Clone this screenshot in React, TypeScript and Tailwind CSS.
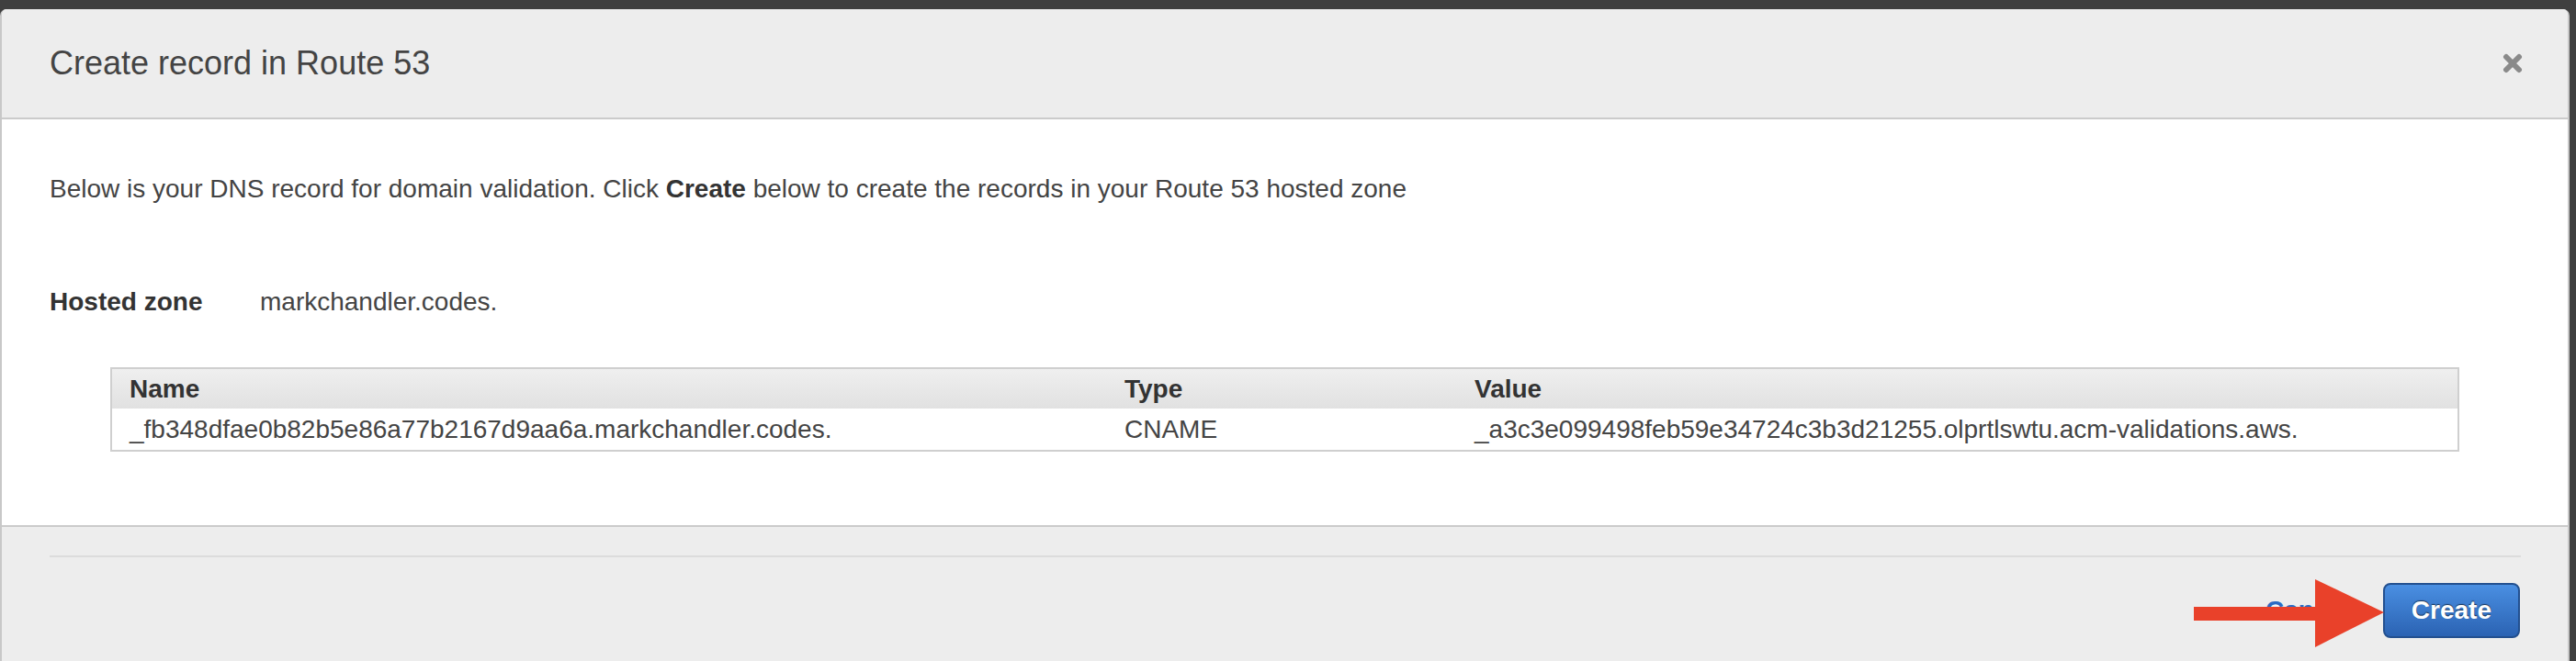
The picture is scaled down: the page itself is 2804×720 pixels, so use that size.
import React from 'react';

const records = [
  {
    name: '_fb348dfae0b82b5e86a77b2167d9aa6a.markchandler.codes.',
    type: 'CNAME',
    value: '_a3c3e099498feb59e34724c3b3d21255.olprtlswtu.acm-validations.aws.',
  },
];

export default function App() {
  return (
    <div className="h-[720px] w-full overflow-hidden bg-[#3f3f3f] pt-[10px] font-['Liberation_Sans',Arial,sans-serif]">
      <div className="w-[2797px] overflow-hidden rounded-t-[7px] border-x-2 border-[#c8c8c8] bg-white">
        {/* Header */}
        <div className="flex h-[120px] items-center justify-between border-b-2 border-[#cbcbcb] bg-[#ededed] pl-[52px] pr-[48px]">
          <h1 className="text-[36px] leading-none text-[#444]">Create record in Route 53</h1>
          <button className="flex h-[24px] w-[24px] items-center justify-center">
            <svg width="22" height="22" viewBox="0 0 22 22">
              <path d="M4 4 L18 18 M18 4 L4 18" stroke="#8a8a8a" strokeWidth="6" strokeLinecap="round" />
            </svg>
          </button>
        </div>

        {/* Body */}
        <div className="px-[52px] pb-[80px] pt-[56px] text-[28px] leading-[40px] text-[#444]">
          <p>
            Below is your DNS record for domain validation. Click <strong className="font-bold text-[#333]">Create</strong> below to create the records in your Route 53 hosted zone
          </p>

          <div className="mt-[83px] flex">
            <span className="w-[229px] font-bold text-[#333]">Hosted zone</span>
            <span>markchandler.codes.</span>
          </div>

          <div className="mx-[66px] mt-[51px] border-2 border-[#cfcfcf]">
            <table className="w-full table-fixed border-collapse text-left text-[28px]">
              <colgroup>
                <col className="w-[1083px]" />
                <col className="w-[381px]" />
                <col />
              </colgroup>
              <thead>
                <tr className="h-[43px] bg-gradient-to-b from-[#efefef] to-[#e1e1e1]">
                  <th className="px-[19px] font-bold leading-none text-[#333]">Name</th>
                  <th className="px-[19px] font-bold leading-none text-[#333]">Type</th>
                  <th className="px-[19px] font-bold leading-none text-[#333]">Value</th>
                </tr>
              </thead>
              <tbody>
                {records.map((r) => (
                  <tr key={r.name} className="h-[45px] bg-white">
                    <td className="px-[19px] leading-none">{r.name}</td>
                    <td className="px-[19px] leading-none">{r.type}</td>
                    <td className="px-[19px] leading-none">{r.value}</td>
                  </tr>
                ))}
              </tbody>
            </table>
          </div>
        </div>

        {/* Footer */}
        <div className="relative h-[200px] border-t-2 border-[#cbcbcb] bg-[#ededed] px-[52px] pt-[31px]">
          <div className="mr-[-1px] h-[2px] bg-[#dcdcdc]" />
          <div className="mt-[28px] flex items-center justify-end gap-[36px]">
            <a className="text-[28px] font-bold text-[#2a6bc4] [text-shadow:0_1px_1px_#fff]">Cancel</a>
            <button className="h-[60px] rounded-[8px] border-2 border-[#23508f] bg-gradient-to-b from-[#4a8fe2] to-[#2b63b3] px-[29px] text-[28px] font-bold text-white [text-shadow:0_-1px_1px_rgba(0,0,0,0.6)]">
              Create
            </button>
          </div>

          {/* annotation arrow */}
          <svg className="absolute left-[2380px] top-[55px]" width="220" height="90" viewBox="0 0 220 90">
            <rect x="6" y="32" width="136" height="15" fill="#e9412a" />
            <polygon points="138,2 213,38 138,76" fill="#e9412a" />
          </svg>
        </div>
      </div>
    </div>
  );
}
